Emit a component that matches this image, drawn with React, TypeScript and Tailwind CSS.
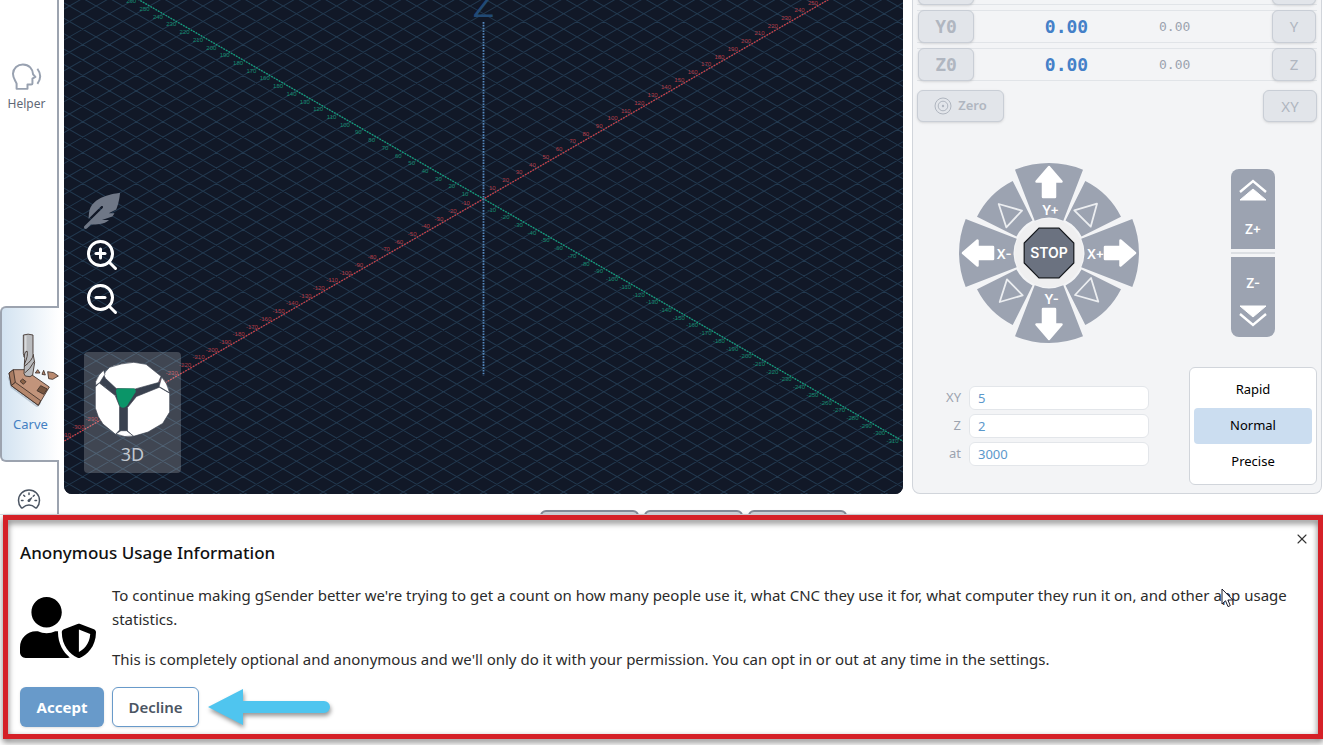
import React from "react";
import { ZoomIn, ZoomOut, X } from "lucide-react";
import { FaFeatherAlt, FaUserShield } from "react-icons/fa";
import { IoSpeedometerOutline } from "react-icons/io5";

const STEP_X = 13.33;
const STEP_Y = 7.7;
const ORIGIN_X = 419.5;
const ORIGIN_Y = 198.5;

const GRID_PATH = Array.from({ length: 81 }, (_, n) => {
  const x = ORIGIN_X + (n - 40) * STEP_X * 2;
  const rise = STEP_Y * 60;
  const run = STEP_X * 60;
  return `M${x - run} ${ORIGIN_Y - rise}L${x + run} ${ORIGIN_Y + rise}M${x - run} ${ORIGIN_Y + rise}L${x + run} ${ORIGIN_Y - rise}`;
}).join("");

function HelperIcon() {
  return (
    <svg viewBox="30 185 100 90" className="h-[30px] w-[33px]" fill="none" stroke="#98a1b0" strokeWidth="6" aria-hidden="true">
      <path d="M50 269V253C46 243 39 236 39 223C40 206 53 195 69 195C88 195 99 209 100 225L107 233L98 238V253Q98 256 94 256H83V269Z" strokeLinejoin="round" />
      <path d="M113 208Q130 231 113 254" />
    </svg>
  );
}

function CarveIcon() {
  return (
    <svg viewBox="9 9 156 225" className="h-[75px] w-[52px]" stroke="#3a2d27" strokeWidth="2.5" strokeLinejoin="round" aria-hidden="true">
      <path d="M10 140L20 176L100 236L112 222L30 165Z" fill="#7d8ea0" opacity="0.4" stroke="none" />
      <path d="M28 122L15 132L22 170L103 229L136 174L90 142L62 122Z" fill="#c2947b" />
      <path d="M28 122L15 132L22 170L34 160Z" fill="#a87b62" />
      <path d="M34 160L110 215L103 229L22 170Z" fill="#b5876d" />
      <path d="M48 157L56 150L66 158L58 166Z" fill="#8a6247" />
      <path d="M110 170L130 180L119 196L99 185Z" fill="#75543f" />
      <path d="M58 18Q72 13 87 18V74L92 100L86 138L78 143L64 141L60 134L62 88L58 74Z" fill="#b9bbbe" />
      <path d="M65 20V66" stroke="#d9dadc" strokeWidth="5" />
      <path d="M60 84Q62 66 69 66Q74 78 61 106M88 76Q86 94 61 112M90 98Q78 122 62 132" fill="none" strokeWidth="2.5" />
      <path d="M94 132L101 122L108 132ZM114 136L119 124L124 138ZM131 128L149 131L163 141L146 151L134 149Z" fill="#b98a70" />
    </svg>
  );
}

function Sidebar() {
  return (
    <nav className="flex w-[59px] shrink-0 flex-col overflow-hidden">
      <div className="flex h-[306px] shrink-0 flex-col border-r-2 border-[#9ca3af] pt-[61px]">
        <button className="flex flex-col items-center gap-[5px] pr-1 text-[12px] leading-4 text-[#5f6876]">
          <HelperIcon />
          Helper
        </button>
      </div>
      <button className="flex h-[156px] shrink-0 flex-col items-center gap-[7px] rounded-l-md border-y-2 border-l-2 border-[#9ca3af] bg-linear-to-r from-[#d3e3f1] to-white pt-6 text-[13px] leading-5 text-[#4480c2]">
        <span className="pl-1">
          <CarveIcon />
        </span>
        Carve
      </button>
      <div className="flex grow flex-col items-center border-r-2 border-[#9ca3af] pt-[25px]">
        <button aria-label="Stats" className="text-[#4b5563]">
          <IoSpeedometerOutline size={24} />
        </button>
      </div>
    </nav>
  );
}

function AxisLabels() {
  const items: React.ReactNode[] = [];
  for (let i = -31; i <= 26; i++) {
    if (i === 0) continue;
    if (i < 26) {
      items.push(
        <text key={`x${i}`} x={ORIGIN_X + i * STEP_X - 4.5} y={ORIGIN_Y - i * STEP_Y - 1.5} fill="#b23a44">
          {i * 10}
        </text>,
      );
    }
    items.push(
      <text key={`y${i}`} x={ORIGIN_X - i * STEP_X - 5} y={ORIGIN_Y - i * STEP_Y + 5} fill="#138a6c">
        {i * 10}
      </text>,
    );
  }
  return (
    <g fontSize="6" textAnchor="middle" fontFamily="Liberation Sans, sans-serif">
      {items}
    </g>
  );
}

function Toolpath() {
  return (
    <svg viewBox="0 0 839 493" preserveAspectRatio="xMidYMid slice" className="absolute inset-0 h-full w-full" aria-hidden="true">
      <rect width="839" height="493" fill="#111827" />
      <path d={GRID_PATH} stroke="#22384e" strokeWidth="1" />
      <path d="M-13.7 448.7L779.5 -9.5" stroke="#d23f45" strokeWidth="1.3" strokeDasharray="1.7 1.2" />
      <path d="M59.5 -9.5L852.7 448.7" stroke="#12a37c" strokeWidth="1.3" strokeDasharray="1.7 1.2" />
      <path d="M419.5 22V375" stroke="#5487bd" strokeWidth="1.8" strokeDasharray="1.6 1.2" />
      <AxisLabels />
      <text x="419.5" y="17" fontSize="34" textAnchor="middle" fill="#214a75" fontFamily="Liberation Sans, sans-serif">
        Z
      </text>
    </svg>
  );
}

function ViewCube() {
  return (
    <svg viewBox="15 18 232 232" className="size-[77px]" fill="#fff" stroke="#39414f" strokeWidth="2" strokeLinejoin="round" aria-hidden="true">
      <path d="M46 50L36 80L80 122L92 152V228H116V158L143 124L212 97L214 82L140 100H82Z" fill="#39414f" />
      <path d="M50 50L62 37Q98 24 135 22L172 28L217 64L209 83L140 102L82 101L50 71L44 60Z" />
      <path d="M19 96L31 84L79 122L92 154V226L80 239L42 208L28 186L19 160Z" />
      <path d="M143 125L212 97L243 115V172L222 206L178 232L134 245L116 229V158Z" />
      <path d="M20 80Q28 58 44 46L48 58L33 82L20 92Z" />
      <path d="M219 66Q236 84 243 114L211 95Z" />
      <path d="M81 238L96 228H113L134 244Q108 250 81 238Z" />
      <path d="M81 108Q82 101 88 101H135Q143 104 140 112L115 152Q103 164 93 154Q84 134 81 108Z" fill="#0b9568" stroke="none" />
    </svg>
  );
}

function Visualizer() {
  return (
    <section className="relative flex grow overflow-hidden rounded-b-lg bg-[#111827]">
      <Toolpath />
      <div className="relative flex flex-col items-start justify-end gap-2 pb-[21px] pl-5">
        <button aria-label="Lightweight mode" className="text-[#6f7786]">
          <FaFeatherAlt size={36} />
        </button>
        <button aria-label="Zoom in" className="text-white">
          <ZoomIn size={36} />
        </button>
        <button aria-label="Zoom out" className="mb-[27px] text-white">
          <ZoomOut size={36} />
        </button>
        <button className="flex h-[121px] w-[97px] flex-col items-center justify-end gap-1 rounded bg-white/20 pb-[7px] text-[18px] leading-6 text-[#c3c8d0]">
          <ViewCube />
          3D
        </button>
      </div>
    </section>
  );
}

const grayButton =
  "flex items-center justify-center rounded-md border border-[#c9ced6] bg-[#e2e5ea] text-[#b0b6c0] shadow-sm";

function AxisRow({ axis }: { axis: string }) {
  return (
    <div className="flex h-[33px] shrink-0 items-center border-y border-[#e1e4e8] pl-px">
      <button className={`${grayButton} h-[33px] w-14 font-['DejaVu_Sans_Mono',monospace] text-[18px] font-bold`}>
        {axis}0
      </button>
      <span className="w-[185px] text-center font-['DejaVu_Sans_Mono',monospace] text-[18px] font-bold text-[#4480c8]">0.00</span>
      <span className="grow font-['DejaVu_Sans_Mono',monospace] text-[13px] text-[#9ca3af]">0.00</span>
      <button className={`${grayButton} mr-px h-[33px] w-11 text-[15px]`}>{axis}</button>
    </div>
  );
}

const UP = "M0 -86L12.5 -71.5H6V-56H-6V-71.5H-12.5Z";
const WEDGE = "M-34 -83.3A90 90 0 0 1 34 -83.3L14.3 -32.3A35 35 0 0 0 -14.3 -32.3Z";
const DIAGONAL = "M36.3 -72A80.6 80.6 0 0 1 72 -36.3L32.5 -16.5A36 36 0 0 0 16.5 -32.5Z";

function JogWheel() {
  return (
    <svg viewBox="-90 -90 180 180" className="size-[180px]" role="group" aria-label="Jog controls">
      {[0, 90, 180, 270].map((a) => (
        <g key={a} transform={`rotate(${a})`}>
          <path d={WEDGE} fill="#9ca3b1" />
          <path d={DIAGONAL} fill="#9ca3b1" />
          <path d={UP} fill="#fff" stroke="#fff" strokeWidth="2.5" strokeLinejoin="round" />
        </g>
      ))}
      <circle r="34.3" fill="#efeff0" />
      <g fill="none" stroke="#eceef1" strokeWidth="1.8" strokeLinejoin="round">
        <path d="M25.3 -42.7L48 -49.3L41.7 -26.3Z" />
        <path d="M-50.3 -49L-27 -42.3L-42.7 -25.7Z" />
        <path d="M-42 26.3L-26.3 42.3L-49.3 49Z" />
        <path d="M42 25L26 42L49.3 48.7Z" />
      </g>
      <path d="M-10 -24.8H10L24.8 -10V10L10 24.8H-10L-24.8 10V-10Z" fill="#6b7280" stroke="#15181d" strokeWidth="1.2" />
      <g fill="#fff" fontFamily="Inter, sans-serif" fontWeight="600" fontSize="13" textAnchor="middle">
        <text x="1.5" y="-38">Y+</text>
        <text x="2.5" y="51">Y-</text>
        <text x="-45" y="6">X-</text>
        <text x="46.5" y="6">X+</text>
        <text x="0" y="5" fontSize="14">STOP</text>
      </g>
    </svg>
  );
}

function ZChevron() {
  return (
    <>
      <path d="M2 13L15 2L28 13" fill="none" stroke="#fff" strokeWidth="2.4" />
      <path d="M2 21L15 10L28 21Z" fill="#fff" stroke="#fff" strokeWidth="1" strokeLinejoin="round" />
    </>
  );
}

function ZJog() {
  return (
    <div className="flex w-11 flex-col items-stretch font-[Inter,sans-serif] text-[13px] font-semibold text-white">
      <button className="flex h-20 flex-col items-center justify-between rounded-t-lg bg-[#9ca3b1] pt-2.5 pb-3 leading-4">
        <svg viewBox="0 0 30 24" className="h-6 w-[30px]" aria-hidden="true"><ZChevron /></svg>
        Z+
      </button>
      <hr className="my-[3px] border-t-2 border-[#dcdfe3]" />
      <button className="flex h-20 flex-col items-center justify-between rounded-b-lg bg-[#9ca3b1] pt-[18px] pb-2.5 leading-4">
        Z-
        <svg viewBox="0 0 30 24" className="h-6 w-[30px] rotate-180" aria-hidden="true"><ZChevron /></svg>
      </button>
    </div>
  );
}

function JogField({ label, value }: { label: string; value: string }) {
  return (
    <label className="flex h-6 items-center gap-2">
      <span className="w-[44px] text-right">{label}</span>
      <input defaultValue={value} className="h-6 w-[180px] rounded-md border border-[#e3e6ea] bg-white px-2 text-[#5b98cb]" />
    </label>
  );
}

function ControlPanel() {
  return (
    <section className="mr-px flex w-[410px] shrink-0 flex-col justify-end overflow-hidden rounded-b-lg border-x border-b border-[#d1d5db] bg-[#f3f4f6] px-1 pb-2">
      <div className="flex flex-col gap-[5px]">
        <AxisRow axis="X" />
        <AxisRow axis="Y" />
        <AxisRow axis="Z" />
      </div>
      <div className="mt-[9px] flex justify-between">
        <button className={`${grayButton} h-8 w-[87px] gap-1.5 text-[13px] font-semibold`}>
          <svg viewBox="0 0 18 18" className="size-[18px]" fill="none" stroke="currentColor" aria-hidden="true">
            <circle cx="9" cy="9" r="8" />
            <circle cx="9" cy="9" r="4.8" />
            <circle cx="9" cy="9" r="1.2" fill="currentColor" stroke="none" />
          </svg>
          Zero
        </button>
        <button className={`${grayButton} h-8 w-[54px] text-[15px]`}>XY</button>
      </div>
      <div className="mt-[41px] flex items-center justify-between px-[42px]">
        <JogWheel />
        <ZJog />
      </div>
      <div className="mt-6 flex items-center justify-between">
        <div className="flex flex-col gap-1 text-[13px] text-[#9ca3af]">
          <JogField label="XY" value="5" />
          <JogField label="Z" value="2" />
          <JogField label="at" value="3000" />
        </div>
        <div className="flex w-32 flex-col rounded-md border border-[#d1d5db] bg-white p-1 text-[13px] text-black">
          <button className="h-9 rounded">Rapid</button>
          <button className="h-9 rounded bg-[#cbddf0]">Normal</button>
          <button className="h-9 rounded">Precise</button>
        </div>
      </div>
    </section>
  );
}

function UsageBanner() {
  return (
    <section aria-labelledby="usage-title" className="relative h-[231px] shrink-0 border-t border-[#d9dce1] bg-white px-5 pt-[26px] text-[15px] leading-6 text-[#2b2b2b]">
      <div className="pointer-events-none absolute top-0 right-0 bottom-1.5 left-[3px] border-[5px] border-[#d52027] drop-shadow-[0_3px_3px_rgba(0,0,0,0.55)]" />
      <button aria-label="Close" className="absolute top-4 right-[13px] text-[#333]">
        <X size={16} strokeWidth={1.6} />
      </button>
      <h2 id="usage-title" className="text-[17px] font-medium text-[#111]">Anonymous Usage Information</h2>
      <div className="mt-[18px] flex items-center gap-4">
        <FaUserShield className="h-[61px] w-[76px] shrink-0 text-black" />
        <div className="flex flex-col gap-4">
          <p>
            To continue making gSender better we're trying to get a count on how many people use it, what CNC they use it for, what computer they run it on, and other app usage statistics.
          </p>
          <p>
            This is completely optional and anonymous and we'll only do it with your permission. You can opt in or out at any time in the settings.
          </p>
        </div>
      </div>
      <div className="mt-4 flex items-center gap-2">
        <button className="h-10 w-[84px] rounded-md bg-[#689aca] font-bold text-white shadow-sm">Accept</button>
        <button className="h-10 w-[87px] rounded-md border border-[#689aca] bg-white font-semibold text-[#4b5563] shadow-sm">Decline</button>
        <svg viewBox="0 0 122 36" className="h-9 w-[122px] overflow-visible drop-shadow-[1px_3px_2px_rgba(0,0,0,0.4)]" fill="#4fc5ef" aria-hidden="true">
          <path d="M1 18L36 0V12H117A6 6 0 0 1 117 24H36V36Z" />
        </svg>
      </div>
      <svg viewBox="0 0 13 20" className="absolute top-[73px] right-[89px] h-5 w-[13px]" fill="none" stroke="#1a1a2a" strokeWidth="1" aria-hidden="true">
        <path d="M1 1V16L4.5 12.8L7 18.6L9.3 17.6L6.9 12H11.8Z" fill="#fff" />
      </svg>
    </section>
  );
}

export default function App() {
  return (
    <div className="flex h-screen flex-col overflow-hidden bg-white font-['Noto_Sans','Open_Sans',sans-serif]">
      <div className="flex min-h-0 grow gap-[5px]">
        <Sidebar />
        <main className="flex min-w-0 grow flex-col">
          <div className="flex min-h-0 grow gap-[9px]">
            <Visualizer />
            <ControlPanel />
          </div>
          <div className="flex h-5 shrink-0 justify-center gap-[5px] overflow-hidden pt-4">
            {["Start", "Pause", "Stop"].map((name) => (
              <button key={name} aria-label={name} className="h-10 w-[99px] shrink-0 rounded-md border-2 border-[#848a96] bg-[#d1d5db] shadow-md" />
            ))}
          </div>
        </main>
      </div>
      <UsageBanner />
    </div>
  );
}
